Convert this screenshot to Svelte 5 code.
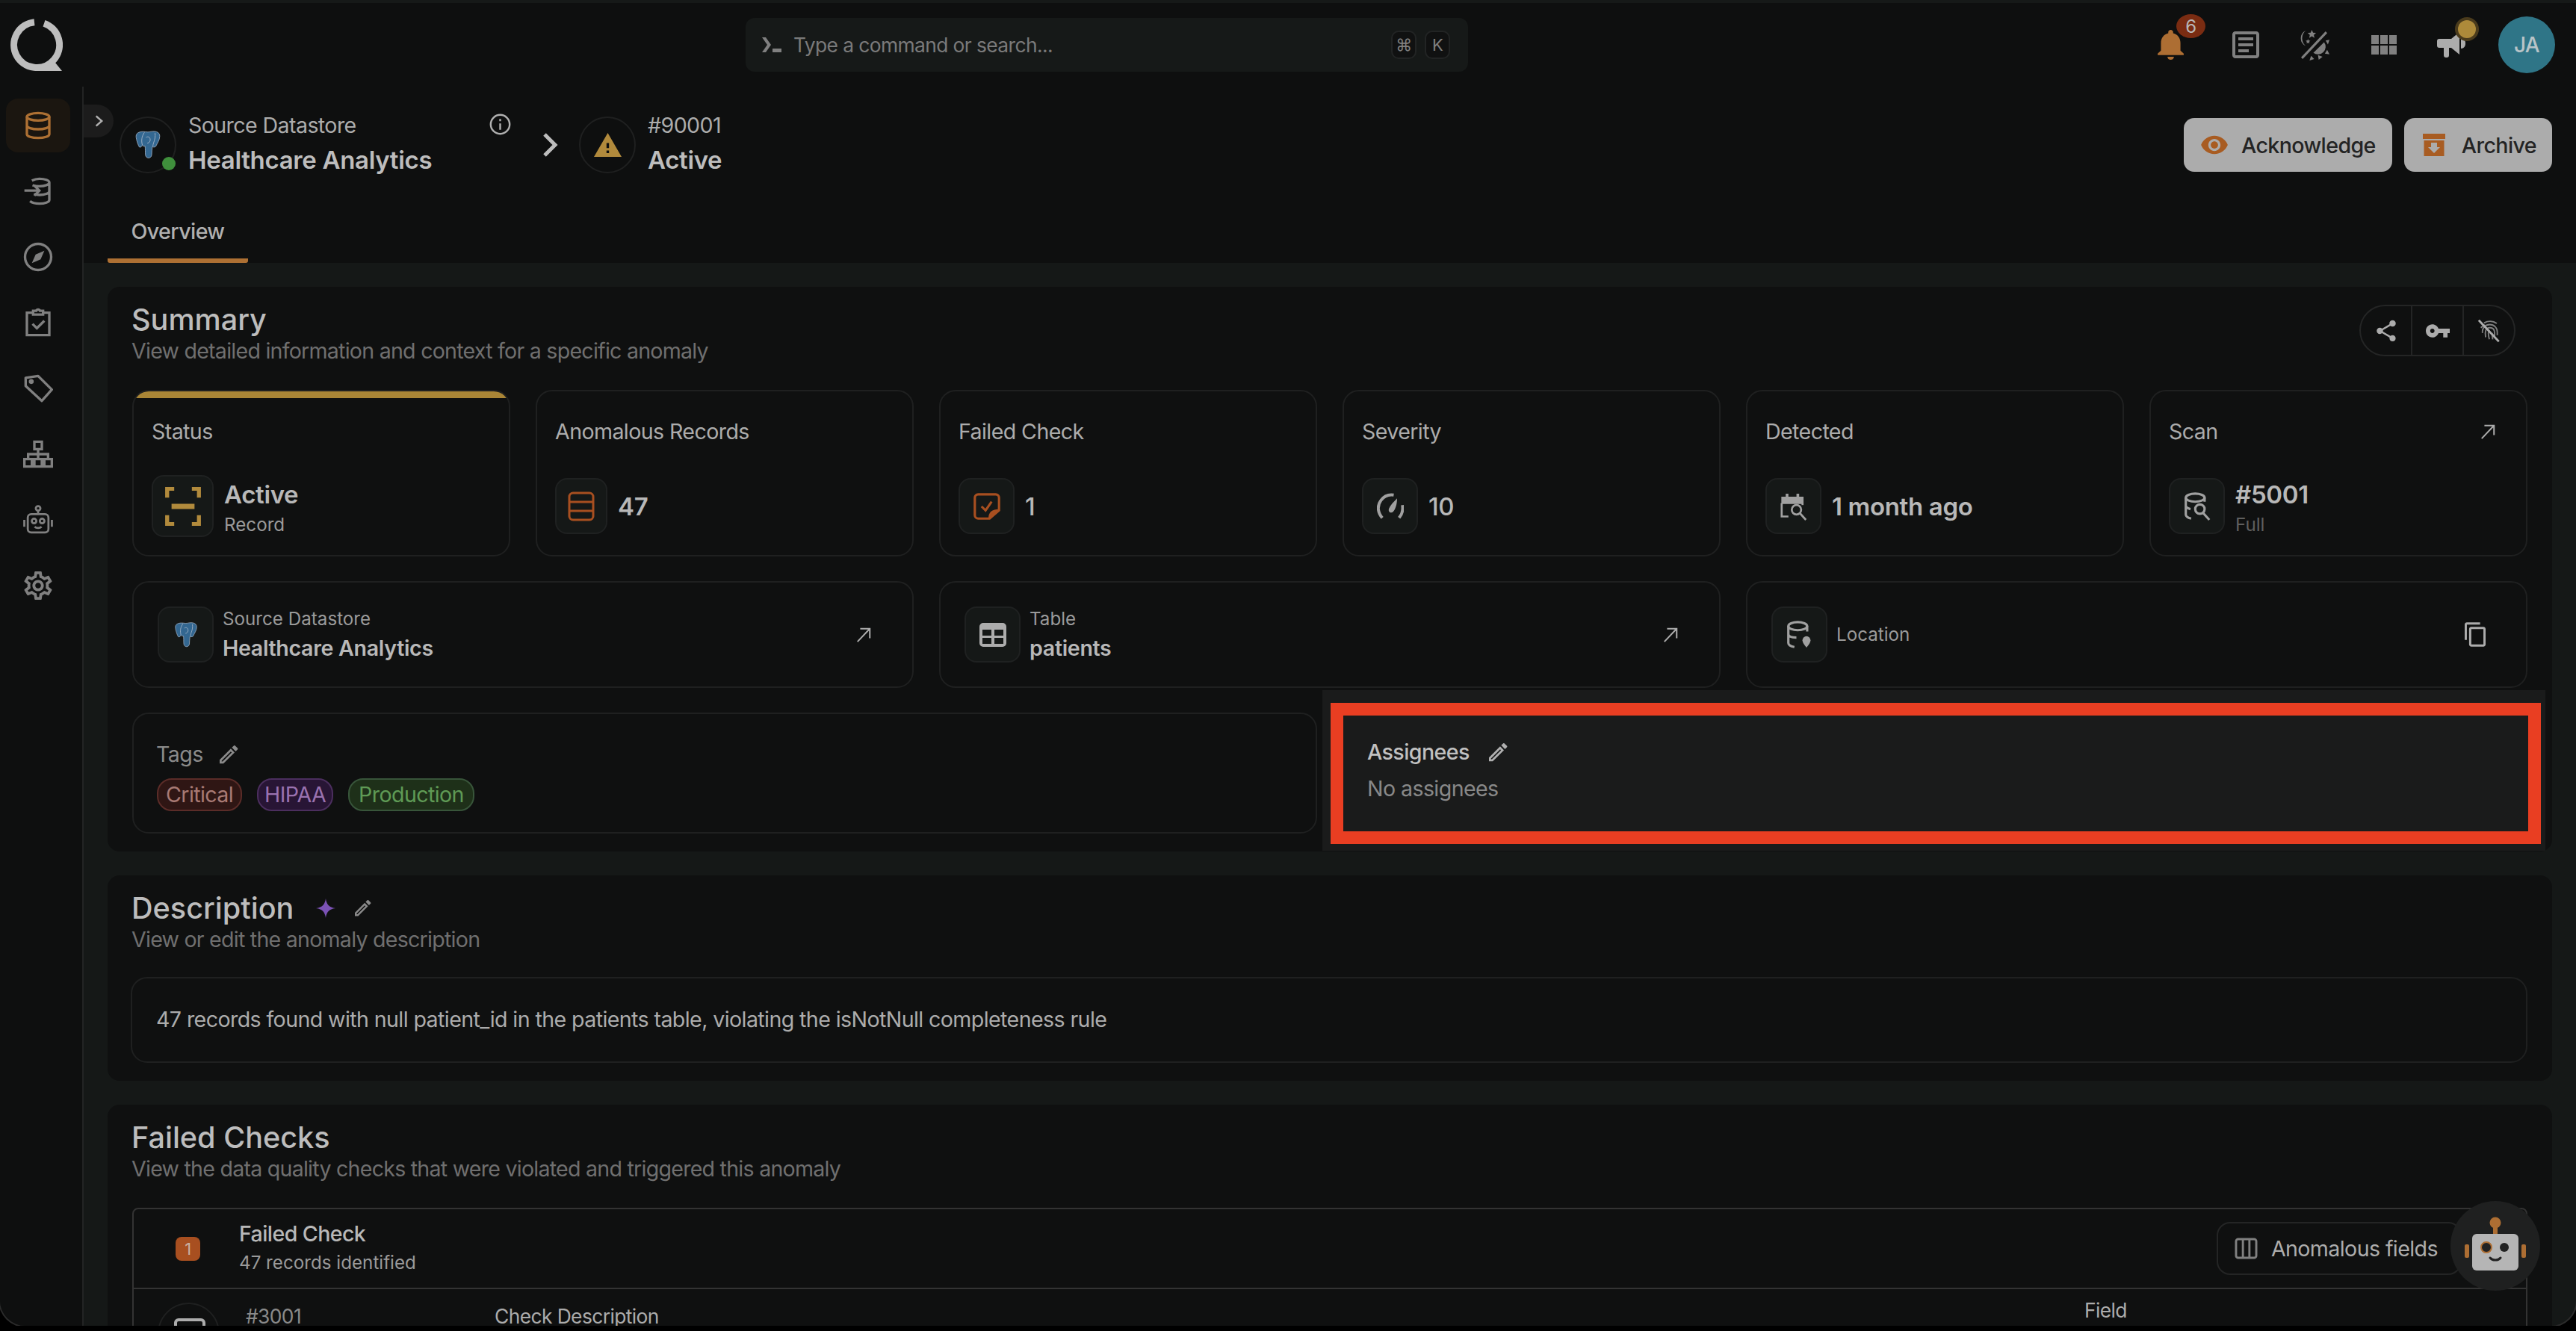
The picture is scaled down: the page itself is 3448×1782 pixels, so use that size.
<script>
  const navIcons = ["inbound", "compass", "clipboard", "tag", "sitemap", "bot", "gear"];
  const gearPath =
    "M19.43 12.98c.04-.32.07-.64.07-.98 0-.34-.03-.66-.07-.98l2.11-1.65c.19-.15.24-.42.12-.64l-2-3.46c-.09-.16-.26-.25-.44-.25-.06 0-.12.01-.17.03l-2.49 1c-.52-.4-1.08-.73-1.69-.98l-.38-2.65C14.46 2.18 14.25 2 14 2h-4c-.25 0-.46.18-.49.42l-.38 2.65c-.61.25-1.17.59-1.69.98l-2.49-1c-.06-.02-.12-.03-.18-.03-.17 0-.34.09-.43.25l-2 3.46c-.13.22-.07.49.12.64l2.11 1.65c-.04.32-.07.65-.07.98 0 .33.03.66.07.98l-2.11 1.65c-.19.15-.24.42-.12.64l2 3.46c.09.16.26.25.44.25.06 0 .12-.01.17-.03l2.49-1c.52.4 1.08.73 1.69.98l.38 2.65c.03.24.24.42.49.42h4c.25 0 .46-.18.49-.42l.38-2.65c.61-.25 1.17-.59 1.69-.98l2.49 1c.06.02.12.03.18.03.17 0 .34-.09.43-.25l2-3.46c.12-.22.07-.49-.12-.64l-2.11-1.65zm-1.98-1.71c.04.31.05.52.05.73 0 .21-.02.43-.05.73l-.14 1.13.89.7 1.08.84-.7 1.21-1.27-.51-1.04-.42-.9.68c-.43.32-.84.56-1.25.73l-1.06.43-.16 1.13-.2 1.35h-1.4l-.19-1.35-.16-1.13-1.06-.43c-.43-.18-.83-.41-1.23-.71l-.91-.7-1.06.43-1.27.51-.7-1.21 1.08-.84.89-.7-.14-1.13c-.03-.31-.05-.54-.05-.74s.02-.43.05-.73l.14-1.13-.89-.7-1.08-.84.7-1.21 1.27.51 1.04.42.9-.68c.43-.32.84-.56 1.25-.73l1.06-.43.16-1.13.2-1.35h1.39l.19 1.35.16 1.13 1.06.43c.43.18.83.41 1.23.71l.91.7 1.06-.43 1.27-.51.7 1.21-1.07.85-.89.7.14 1.13zM12 8c-2.21 0-4 1.79-4 4s1.79 4 4 4 4-1.79 4-4-1.79-4-4-4zm0 6c-1.1 0-2-.9-2-2s.9-2 2-2 2 .9 2 2-.9 2-2 2z";
  const pencilPath =
    "M3 17.25V21h3.75L17.81 9.94l-3.75-3.75L3 17.25zM5.92 19H5v-.92l9.06-9.06.92.92L5.92 19zM20.71 7.04a.996.996 0 0 0 0-1.41l-2.34-2.34a.996.996 0 0 0-1.41 0l-1.83 1.83 3.75 3.75 1.83-1.83z";
  const elephantPath =
    "M2.5 5C2.5 2 6 1 10 1.5c1 .1 2 .3 3 .1 4-1 8.5-.6 8.5 3.4 0 3-2 5.5-2.800 7.5-.5 1.300-1.500 1.500-3.200 1-.4 2-.3 4.500-.5 6.500-.1 1.500-1.200 2.500-2.500 2.500s-2.400-1-2.500-2.500c-.2-2.500 0-5-.3-7-1 .2-1.700 0-2.300-.8-.3 1.200-1.200 2-2.300 1.500C4.500 13 2.500 8 2.500 5z";
</script>

{#snippet elephant()}
  <svg class="elephant" viewBox="0 0 24 24">
    <path d={elephantPath} fill="#336791" stroke="#9fb0c4" stroke-width=".5" />
    <path d="M7.500 12c-.9-3-.6-7 1.700-10M16 13c.1-3 2.300-5 1.700-10.500M10.500 6c1.500-1 3-.4 3.300 1.400.2 1.600-.6 3-2.300 3.300" fill="none" stroke="#9fb0c4" stroke-width=".6" />
  </svg>
{/snippet}

{#snippet pencil(cls)}
  <svg class={cls} viewBox="3 3 18.500 18.500" fill="currentColor"><path d={pencilPath} /></svg>
{/snippet}

{#snippet northEast()}
  <svg class="ne" viewBox="0 0 24 24" fill="none" stroke="currentColor" stroke-width="2.2"><path d="M3 22 21 3M7 3h14v14" /></svg>
{/snippet}

<div class="frame">
  <header class="topbar">
    <svg class="logo" viewBox="0 0 70 70">
      <path d="M32 4.700A30.500 30.500 0 1 0 45 6.200" fill="none" stroke="#bdbdbd" stroke-width="9" />
      <path d="M35 70 36 63H49L56 54 69 70z" fill="#bdbdbd" />
    </svg>
    <div class="search">
      <svg class="prompt" viewBox="0 0 30 24" fill="#808080"><path d="M2 2h5l7 10-7 10H2l7-10zM16 17h12v5H16z" /></svg>
      <span class="placeholder">Type a command or search...</span>
      <kbd>⌘</kbd>
      <kbd>K</kbd>
    </div>
    <div class="top-icons">
      <div class="bell">
        <svg viewBox="3.500 2 17 20.500" preserveAspectRatio="none" fill="#ad6e33"><path d="M12 22c1.100 0 2-.9 2-2h-4c0 1.100.89 2 2 2zm6-6v-5c0-3.070-1.640-5.640-4.500-6.320V4c0-.83-.67-1.500-1.500-1.500s-1.500.67-1.500 1.500v.68C7.630 5.360 6 7.920 6 11v5l-2 2v1h16v-1l-2-2z" /></svg>
        <span class="count">6</span>
      </div>
      <svg class="doc" viewBox="3 3 18 18" fill="#808080"><path d="M19 5v14H5V5h14m0-2H5c-1.100 0-2 .9-2 2v14c0 1.100.9 2 2 2h14c1.100 0 2-.9 2-2V5c0-1.100-.9-2-2-2zM14 17H7v-2h7v2zm3-4H7v-2h10v2zm0-4H7V7h10v2z" /></svg>
      <svg class="theme" viewBox="0 0 40 40" fill="#808080">
        <path d="M9 1A11 11 0 0 0 9 21 13 13 0 0 1 9 1z" />
        <path d="m17 0 1.600 3.600 3.900.4-2.900 2.600.8 3.800-3.400-2-3.400 2 .8-3.800L11.500 4l3.900-.4zM12 12l.9 2 2.200.2-1.700 1.500.5 2.200-1.900-1.100-1.900 1.100.5-2.200-1.700-1.500 2.200-.2z" />
        <path d="M33 16a10 10 0 0 1-14 14z" />
        <path d="m35 14 5-1-2 6zM37 26l3 6-6-1zM26 39l-1-6 6 2zM14 40l2-6 4 4z" />
        <path d="M4 37 36 3" stroke="#808080" stroke-width="3" fill="none" />
      </svg>
      <svg class="apps" viewBox="0 0 34 26" fill="#808080">
        <path d="M0 0h10v12H0zM12 0h10v12H12zM24 0h10v12H24zM0 14h10v12H0zM12 14h10v12H12zM24 14h10v12H24z" />
      </svg>
      <div class="mega">
        <svg viewBox="0 0 40 34" fill="#acacac">
          <path d="M3 9h16L30 0v30L19 21h-3v10c0 2-1 3-3 3h-1c-2 0-3-1-3-3V21H3c-2 0-3-1-3-3v-6c0-2 1-3 3-3z" />
          <path d="M32 8c4 0 6 3 6 7s-2 7-6 7z" />
        </svg>
        <span class="dot"></span>
      </div>
      <div class="avatar">JA</div>
    </div>
  </header>

  <div class="body">
    <nav class="sidebar">
      <div class="nav-item active">
        <svg viewBox="0 0 24 24" fill="none" stroke="#ad7033" stroke-width="2">
          <ellipse cx="12" cy="5" rx="9" ry="3" />
          <path d="M3 5v14c0 1.700 4 3 9 3s9-1.300 9-3V5M3 12c0 1.700 4 3 9 3s9-1.300 9-3" />
        </svg>
      </div>
      {#each navIcons as icon}
        <div class="nav-item">
          {#if icon === "inbound"}
            <svg viewBox="0 0 24 24" fill="none" stroke="#808080" stroke-width="2">
              <path d="M7 3.500C9 2.500 11 2 13 2c4.500 0 8 1.300 8 3v14c0 1.700-3.500 3-8 3-3.500 0-6-.7-7.500-2M21 5c0 1.700-3.500 3-8 3-2 0-4-.3-5.500-.8M21 12c0 1.700-3.500 3-8 3-1.500 0-3-.2-4.500-.6M1 11.500h12M9 7.500l4 4-4 4" />
            </svg>
          {:else if icon === "compass"}
            <svg viewBox="0 0 24 24" fill="none" stroke="#808080" stroke-width="2">
              <circle cx="12" cy="12" r="10.500" />
              <path d="m17 7-3 7-7 3 3-7z" fill="#808080" stroke="none" />
            </svg>
          {:else if icon === "clipboard"}
            <svg viewBox="0 0 24 24" fill="none" stroke="#808080" stroke-width="2">
              <path d="M8 4H3v18h18V4h-5M8 2.500h2.500a1.600 1.600 0 0 1 3 0H16v3H8zM7.500 13l3.500 3.500 6-6" />
            </svg>
          {:else if icon === "tag"}
            <svg viewBox="0 0 24 24" fill="none" stroke="#808080" stroke-width="2">
              <path d="M2 3.500 12 2l11 11-8 9L2 10z" stroke-linejoin="round" />
              <circle cx="6.500" cy="6.500" r="1" fill="#808080" />
            </svg>
          {:else if icon === "sitemap"}
            <svg viewBox="0 0 24 24" fill="none" stroke="#808080" stroke-width="2">
              <path d="M9 2h6v6H9zM1 16h6v6H1zM9 16h6v6H9zM17 16h6v6h-6zM12 8v8M4 16v-4h16v4" />
            </svg>
          {:else if icon === "bot"}
            <svg viewBox="0 0 26 26" fill="none" stroke="#808080" stroke-width="1.800">
              <circle cx="13" cy="3" r="2" />
              <path d="M13 5v3" />
              <rect x="4" y="8" width="18" height="16" rx="3" />
              <circle cx="9.500" cy="14" r="2" />
              <circle cx="16.500" cy="14" r="2" />
              <path d="M10 19c1.500 1.500 4.500 1.500 6 0M1 13v6M25 13v6" />
            </svg>
          {:else}
            <svg viewBox="1.500 1.500 21 21" fill="#808080"><path d={gearPath} /></svg>
          {/if}
        </div>
      {/each}
    </nav>

    <main class="main">
      <button class="collapse" aria-label="Expand">
        <svg viewBox="0 0 24 24" fill="none" stroke="#b0b0b0" stroke-width="3"><path d="m8 4 9 8-9 8" /></svg>
      </button>

      <section class="page-head">
        <div class="head-row">
          <div class="crumb-icon">
            {@render elephant()}
            <span class="online"></span>
          </div>
          <div class="crumb-text first">
            <span class="crumb-label">Source Datastore</span>
            <span class="crumb-value">Healthcare Analytics</span>
          </div>
          <svg class="info" viewBox="0 0 24 24" fill="none" stroke="#b0b0b0" stroke-width="2">
            <circle cx="12" cy="12" r="10.500" />
            <path d="M12 11v7M12 6v2.500" />
          </svg>
          <svg class="crumb-chevron" viewBox="0 0 22 32" fill="none" stroke="#bdbdbd" stroke-width="5"><path d="m3 2 14 14L3 30" /></svg>
          <div class="crumb-icon warn">
            <svg viewBox="1 2 22 19" fill="#b18a3c"><path d="M1 21h22L12 2 1 21zm12-3h-2v-2h2v2zm0-4h-2v-4h2v4z" /></svg>
          </div>
          <div class="crumb-text">
            <span class="crumb-label">#90001</span>
            <span class="crumb-value">Active</span>
          </div>
          <div class="head-actions">
            <button class="action ack">
              <svg viewBox="1 4 22 16" fill="#a85c22"><path d="M12 4.500C7 4.500 2.730 7.610 1 12c1.730 4.390 6 7.500 11 7.500s9.270-3.110 11-7.500c-1.730-4.390-6-7.500-11-7.500zM12 17c-2.760 0-5-2.240-5-5s2.240-5 5-5 5 2.240 5 5-2.240 5-5 5zm0-8c-1.660 0-3 1.340-3 3s1.340 3 3 3 3-1.340 3-3-1.340-3-3-3z" /></svg>
              Acknowledge
            </button>
            <button class="action arc">
              <svg viewBox="0 0 30 30" fill="#a85c22"><path d="M0 0h30v7H0zM1.500 9h27v21h-27zM11 12v6H7l8 8 8-8h-4v-6z" fill-rule="evenodd" /></svg>
              Archive
            </button>
          </div>
        </div>
        <div class="tab">Overview</div>
      </section>

      <div class="content">
        <section class="panel summary">
          <div class="panel-head">
            <div>
              <h2>Summary</h2>
              <p>View detailed information and context for a specific anomaly</p>
            </div>
            <div class="tools">
              <span>
                <svg viewBox="0 0 24 24" fill="#acacac"><path d="M18 16.080c-.76 0-1.440.3-1.960.77L8.910 12.700c.05-.23.09-.46.09-.7s-.04-.47-.09-.7l7.050-4.110c.54.5 1.250.81 2.040.81 1.660 0 3-1.340 3-3s-1.340-3-3-3-3 1.340-3 3c0 .24.04.47.09.7L8.040 9.810C7.500 9.310 6.790 9 6 9c-1.660 0-3 1.340-3 3s1.340 3 3 3c.79 0 1.500-.31 2.040-.81l7.120 4.160c-.05.21-.08.43-.08.65 0 1.610 1.310 2.920 2.920 2.920 1.610 0 2.920-1.310 2.920-2.920s-1.310-2.920-2.920-2.920z" /></svg>
              </span>
              <span>
                <svg class="key" viewBox="1 6 22 12" fill="#acacac"><path d="M12.650 10C11.830 7.670 9.610 6 7 6c-3.310 0-6 2.690-6 6s2.690 6 6 6c2.610 0 4.830-1.670 5.650-4H17v4h4v-4h2v-4H12.650zM7 14c-1.100 0-2-.9-2-2s.9-2 2-2 2 .9 2 2-.9 2-2 2z" /></svg>
              </span>
              <span>
                <svg viewBox="0 0 24 24" fill="none" stroke="#808080" stroke-width="1.300">
                  <path d="M7 4.500a11 11 0 0 1 12 .5M4 9a10 10 0 0 1 4-2.500M5.500 14c-.5-5 3-8 7-8s7 3 7 7v3M8.500 18c-1-5 0-9 4-9s4.500 3 4.500 5v4M12 11c-1.500 1.500-1 5 0 9M14.500 14c0 2 .3 4 .7 6" />
                  <path d="m2 2 19 20" stroke="#acacac" stroke-width="2" />
                </svg>
              </span>
            </div>
          </div>

          <div class="grid">
            <div class="card stat status">
              <span class="label">Status</span>
              <div class="value-row">
                <div class="ibox tall">
                  <svg viewBox="0 0 40 44" fill="none" stroke="#b18a3c" stroke-width="4.500">
                    <path d="M2 12V2h8M30 2h8v10M2 32v10h8M30 42h8V32" />
                    <path d="M7 22h26" stroke-width="6" />
                  </svg>
                </div>
                <div class="stack">
                  <strong>Active</strong>
                  <small>Record</small>
                </div>
              </div>
            </div>

            <div class="card stat">
              <span class="label">Anomalous Records</span>
              <div class="value-row">
                <div class="ibox narrow">
                  <svg viewBox="0 0 36 40" fill="none" stroke="#a84f20" stroke-width="3">
                    <rect x="2" y="2" width="32" height="36" rx="5" />
                    <path d="M2 14h32M2 26h32" />
                  </svg>
                </div>
                <strong>47</strong>
              </div>
            </div>

            <div class="card stat">
              <span class="label">Failed Check</span>
              <div class="value-row">
                <div class="ibox">
                  <svg viewBox="0 0 40 40" fill="none" stroke="#a84f20" stroke-width="3.500">
                    <path d="M24 38H7a5 5 0 0 1-5-5V7a5 5 0 0 1 5-5h26a5 5 0 0 1 5 5v19z" />
                    <path d="M24 38c0-8 4-12 14-12" fill="#a84f20" />
                    <path d="m12 20 6 6 9-13" />
                  </svg>
                </div>
                <strong class="light">1</strong>
              </div>
            </div>

            <div class="card stat">
              <span class="label">Severity</span>
              <div class="value-row">
                <div class="ibox">
                  <svg viewBox="0 0 40 40" fill="none" stroke="#a0a0a0" stroke-width="4.500">
                    <path d="M8 37C1 29 0 19 6 11 11 4 18 2 25 3M33 37c5-6 6-13 5-19" />
                    <path d="M30 8c0 8-2 16-6 20-3 3-8 0-6-5 2-5 7-10 12-15z" fill="#a0a0a0" stroke="none" />
                  </svg>
                </div>
                <strong class="light">10</strong>
              </div>
            </div>

            <div class="card stat">
              <span class="label">Detected</span>
              <div class="value-row">
                <div class="ibox">
                  <svg viewBox="0 0 40 42" fill="none" stroke="#a0a0a0" stroke-width="3">
                    <path d="M3 8h30v8H3z" fill="#a0a0a0" />
                    <path d="M10 2v5M26 2v5" stroke-width="4" />
                    <path d="M2 16v20h10" />
                    <circle cx="24" cy="26" r="7" />
                    <path d="m29 31 9 10" />
                    <path d="M33 16v3" />
                  </svg>
                </div>
                <strong>1 month ago</strong>
              </div>
            </div>

            <div class="card stat">
              <div class="label-row">
                <span class="label">Scan</span>
                {@render northEast()}
              </div>
              <div class="value-row">
                <div class="ibox">
                  <svg viewBox="0 0 40 42" fill="none" stroke="#a0a0a0" stroke-width="3.500">
                    <ellipse cx="17" cy="8" rx="14" ry="6" />
                    <path d="M3 8v25c0 3 3 5 8 6M31 8v6M3 20c0 3 3 4 7 5" />
                    <circle cx="24" cy="25" r="7" />
                    <path d="m29 31 9 10" />
                  </svg>
                </div>
                <div class="stack">
                  <strong>#5001</strong>
                  <small class="dim">Full</small>
                </div>
              </div>
            </div>

            <div class="card wide link">
              <div class="ibox">
                {@render elephant()}
              </div>
              <div class="stack">
                <small>Source Datastore</small>
                <strong class="mid">Healthcare Analytics</strong>
              </div>
              {@render northEast()}
            </div>

            <div class="card wide link">
              <div class="ibox">
                <svg viewBox="0 0 36 32" fill="#acacac"><path d="M5 0h26a5 5 0 0 1 5 5v22a5 5 0 0 1-5 5H5a5 5 0 0 1-5-5V5a5 5 0 0 1 5-5zM4 9v8h12V9zM20 9v8h12V9zM4 20v8h12v-8zM20 20v8h12v-8z" fill-rule="evenodd" /></svg>
              </div>
              <div class="stack">
                <small>Table</small>
                <strong class="mid">patients</strong>
              </div>
              {@render northEast()}
            </div>

            <div class="card wide link">
              <div class="ibox">
                <svg viewBox="0 0 40 42" fill="none" stroke="#a0a0a0" stroke-width="3.500">
                  <ellipse cx="17" cy="8" rx="14" ry="6" />
                  <path d="M3 8v25c0 3 3 5 9 6M31 8v8M3 20c0 3 4 5 12 5" />
                  <path d="M30 40c-4-5-6-8-6-11a6 6 0 0 1 12 0c0 3-2 6-6 11z" fill="#a0a0a0" stroke="none" />
                </svg>
              </div>
              <small class="location">Location</small>
              <svg class="copy" viewBox="2 1 19 22" fill="#acacac"><path d="M16 1H4c-1.100 0-2 .9-2 2v14h2V3h12V1zm3 4H8c-1.100 0-2 .9-2 2v14c0 1.100.9 2 2 2h11c1.100 0 2-.9 2-2V7c0-1.100-.9-2-2-2zm0 16H8V7h11v14z" /></svg>
            </div>

            <div class="card half tags">
              <div class="tags-head">
                <span>Tags</span>
                {@render pencil("pen")}
              </div>
              <div class="pills">
                <span class="pill critical">Critical</span>
                <span class="pill hipaa">HIPAA</span>
                <span class="pill production">Production</span>
              </div>
            </div>

            <div class="card half assignees">
              <div class="assignee-head">
                <span>Assignees</span>
                {@render pencil("pen")}
              </div>
              <p>No assignees</p>
            </div>
          </div>
        </section>

        <section class="panel description">
          <div class="title-row">
            <h2>Description</h2>
            <svg class="spark" viewBox="0 0 24 24" fill="#7b52b5"><path d="M12 0c1 7 4 11 12 12-8 1-11 5-12 12-1-7-4-11-12-12 8-1 11-5 12-12z" /></svg>
            {@render pencil("pen small")}
          </div>
          <p>View or edit the anomaly description</p>
          <div class="desc-box">47 records found with null patient_id in the patients table, violating the isNotNull completeness rule</div>
        </section>

        <section class="panel failed">
          <h2>Failed Checks</h2>
          <p>View the data quality checks that were violated and triggered this anomaly</p>
          <div class="check-table">
            <div class="check-head">
              <span class="num">1</span>
              <div class="check-title">
                <span>Failed Check</span>
                <small>47 records identified</small>
              </div>
              <button class="fields">
                <svg viewBox="0 0 32 30" fill="none" stroke="#808080" stroke-width="3">
                  <rect x="2" y="2" width="28" height="26" rx="3" />
                  <path d="M11.500 2v26M20.500 2v26" />
                </svg>
                Anomalous fields
              </button>
            </div>
            <div class="check-row">
              <div class="row-icon"><span></span></div>
              <span class="check-id">#3001</span>
              <span class="check-desc">Check Description</span>
              <span class="check-field">Field</span>
            </div>
          </div>
        </section>
      </div>
    </main>
  </div>

  <button class="assistant" aria-label="Assistant">
    <svg viewBox="0 0 120 120">
      <circle cx="60" cy="29" r="7.500" fill="#ad6e33" />
      <rect x="57" y="30" width="6" height="14" fill="#ad6e33" />
      <rect x="19" y="58" width="6" height="18" rx="2" fill="#ad6e33" />
      <rect x="95" y="58" width="6" height="18" rx="2" fill="#ad6e33" />
      <rect x="29" y="44" width="62" height="49" rx="6" fill="#b5b5b5" />
      <circle cx="48" cy="62" r="7" fill="#222" stroke="#ad6e33" stroke-width="2" />
      <circle cx="72" cy="62" r="6" fill="#222" />
      <path d="M53 76c3 4 11 4 14 0" fill="none" stroke="#222" stroke-width="3" stroke-linecap="round" />
    </svg>
  </button>
</div>

<style>
  :global(body) {
    background: #000;
    margin: 0;
  }

  .frame {
    background: #151817;
    border-radius: 0 0 34px 34px;
    box-shadow: 0 0 0 2px #2b2b2b;
    color: #acacac;
    display: flex;
    flex-direction: column;
    font-family: Inter, "Liberation Sans", sans-serif;
    height: 1775px;
    letter-spacing: -0.6px;
    overflow: hidden;
    position: relative;
    width: 3448px;
  }

  h2,
  p {
    margin: 0;
  }

  button {
    border: 0;
    font: inherit;
    letter-spacing: inherit;
    padding: 0;
  }

  .topbar {
    align-items: center;
    background: #0e0f0f;
    border-top: 4px solid #161918;
    box-sizing: border-box;
    display: flex;
    flex: none;
    height: 116px;
    padding: 0 28px 0 14px;
  }

  .logo {
    height: 70px;
    width: 70px;
  }

  .search {
    align-items: center;
    background: #161918;
    border-radius: 12px;
    box-sizing: border-box;
    display: flex;
    height: 72px;
    margin-left: 914px;
    padding: 0 24px 0 20px;
    width: 967px;
  }

  .prompt {
    height: 24px;
    width: 30px;
  }

  .placeholder {
    color: #7a7a7a;
    flex: 1;
    font-size: 26.4px;
    margin-left: 14px;
  }

  kbd {
    align-items: center;
    background: #101111;
    border: 2px solid #222424;
    border-radius: 10px;
    box-sizing: border-box;
    color: #808080;
    display: flex;
    font-family: inherit;
    font-size: 22px;
    height: 38px;
    justify-content: center;
    margin-left: 11px;
    width: 34px;
  }

  .top-icons {
    align-items: center;
    display: flex;
    margin-left: auto;
  }

  .bell {
    height: 42px;
    position: relative;
    width: 37px;
  }

  .bell svg {
    height: 42px;
    width: 37px;
  }

  .count {
    align-items: center;
    background: #7a2c12;
    border-radius: 50%;
    color: #b8b8b8;
    display: flex;
    font-size: 24px;
    height: 32px;
    justify-content: center;
    left: 26px;
    position: absolute;
    top: -20px;
    width: 39px;
  }

  .doc {
    height: 36px;
    margin-left: 64px;
    width: 36px;
  }

  .theme {
    height: 41px;
    margin-left: 53px;
    width: 41px;
  }

  .apps {
    height: 26px;
    margin-left: 56px;
    width: 34px;
  }

  .mega {
    height: 34px;
    margin-left: 54px;
    position: relative;
    width: 40px;
  }

  .mega svg {
    display: block;
    height: 34px;
    width: 40px;
  }

  .dot {
    background: #ad8a3a;
    border-radius: 50%;
    box-shadow: 0 0 0 4px #4a3b1c;
    height: 24px;
    position: absolute;
    right: -12px;
    top: -16px;
    width: 24px;
  }

  .avatar {
    align-items: center;
    background: #2f7587;
    border-radius: 50%;
    color: #b8c4c8;
    display: flex;
    font-size: 28px;
    font-weight: 500;
    height: 76px;
    justify-content: center;
    margin-left: 42px;
    width: 76px;
  }

  .body {
    display: flex;
    flex: 1;
    min-height: 0;
  }

  .sidebar {
    align-items: flex-start;
    background: #0e0f0f;
    border-right: 2px solid #232424;
    display: flex;
    flex: none;
    flex-direction: column;
    gap: 16px;
    padding: 16px 0 0 8px;
    width: 102px;
  }

  .nav-item {
    align-items: center;
    border-radius: 16px;
    display: flex;
    height: 72px;
    justify-content: center;
    width: 86px;
  }

  .nav-item svg {
    height: 40px;
    width: 40px;
  }

  .nav-item.active {
    background: #1b1610;
  }

  .main {
    flex: 1;
    min-width: 0;
    position: relative;
  }

  .collapse {
    align-items: center;
    background: #1c1c1c;
    border-radius: 0 22px 22px 0;
    display: flex;
    height: 44px;
    justify-content: center;
    left: 0;
    position: absolute;
    top: 24px;
    width: 40px;
  }

  .collapse svg {
    height: 20px;
    width: 20px;
  }

  .page-head {
    background: #0e0f0f;
    display: flex;
    flex-direction: column;
    height: 236px;
    justify-content: space-between;
  }

  .head-row {
    align-items: flex-start;
    display: flex;
    padding: 40px 32px 0 48px;
  }

  .crumb-icon {
    align-items: center;
    border: 2px solid #1f2020;
    border-radius: 50%;
    box-sizing: border-box;
    display: flex;
    flex: none;
    height: 76px;
    justify-content: center;
    position: relative;
    width: 76px;
  }

  .elephant {
    height: 42px;
    width: 40px;
  }

  .online {
    background: #3f8f3c;
    border-radius: 50%;
    bottom: 2px;
    height: 18px;
    position: absolute;
    right: -1px;
    width: 18px;
  }

  .crumb-icon.warn {
    margin-left: 27px;
  }

  .warn svg {
    height: 32px;
    width: 37px;
  }

  .crumb-text {
    display: flex;
    flex-direction: column;
    gap: 8px;
    margin-left: 16px;
    margin-top: -6px;
  }

  .crumb-text.first {
    width: 403px;
  }

  .crumb-label {
    font-size: 28.6px;
    line-height: 36px;
  }

  .crumb-value {
    color: #bdbdbd;
    font-size: 33px;
    font-weight: 600;
    letter-spacing: -0.33px;
    line-height: 40px;
  }

  .info {
    height: 29px;
    margin-top: -4px;
    width: 29px;
  }

  .crumb-chevron {
    height: 32px;
    margin: 22px 0 0 42px;
    width: 22px;
  }

  .head-actions {
    display: flex;
    gap: 16px;
    margin-left: auto;
    margin-top: 2px;
  }

  .action {
    align-items: center;
    background: #acacac;
    border-radius: 14px;
    color: #242424;
    display: flex;
    font-size: 28.6px;
    font-weight: 500;
    height: 72px;
    padding: 0 21px;
  }

  .ack {
    gap: 18px;
    padding: 0 22px 0 23px;
  }

  .ack svg {
    height: 26px;
    width: 36px;
  }

  .arc {
    gap: 22px;
    padding-left: 25px;
  }

  .arc svg {
    height: 30px;
    width: 30px;
  }

  .tab {
    border-bottom: 6px solid #ad7033;
    border-radius: 0 0 3px 3px;
    box-sizing: border-box;
    color: #b0b0b0;
    font-size: 28.6px;
    font-weight: 500;
    height: 66px;
    line-height: 48px;
    margin-left: 32px;
    text-align: center;
    width: 188px;
  }

  .content {
    display: flex;
    flex-direction: column;
    gap: 32px;
    padding: 32px 32px 0;
  }

  .panel {
    background: #0f1010;
    border-radius: 16px;
    flex: none;
    padding: 20px 33px 24px;
  }

  .panel h2 {
    color: #bdbdbd;
    font-size: 39.6px;
    font-weight: 500;
    letter-spacing: 0;
    line-height: 48px;
    margin-left: -1px;
  }

  .panel p {
    color: #6f6f6f;
    font-size: 28.6px;
    letter-spacing: -0.76px;
    line-height: 36px;
    margin-left: -1px;
  }

  .panel-head {
    align-items: flex-start;
    display: flex;
    justify-content: space-between;
  }

  .tools {
    border: 2px solid #242525;
    border-radius: 36px;
    box-sizing: border-box;
    display: flex;
    height: 69px;
    margin: 4px 16px 0 0;
    width: 209px;
  }

  .tools span {
    align-items: center;
    border-left: 2px solid #242525;
    display: flex;
    flex: 1;
    justify-content: center;
  }

  .tools span:first-child {
    border-left: 0;
  }

  .tools svg {
    height: 34px;
    width: 34px;
  }

  .tools .key {
    height: 18px;
    width: 32px;
  }

  .grid {
    display: grid;
    gap: 33px 34px;
    grid-template-columns: repeat(6, 1fr);
    grid-template-rows: 223px 143px 162px;
    margin-top: 34px;
  }

  .card {
    border: 2px solid #1f2020;
    border-radius: 22px;
    box-sizing: border-box;
    min-width: 0;
    position: relative;
  }

  .stat {
    display: flex;
    flex-direction: column;
    padding: 36px 24px 24px;
  }

  .status {
    overflow: hidden;
  }

  .status::before {
    background: #a98536;
    content: "";
    height: 9px;
    left: 0;
    position: absolute;
    right: 0;
    top: 0;
  }

  .label {
    font-size: 28.6px;
    line-height: 36px;
  }

  .label-row {
    align-items: center;
    display: flex;
    justify-content: space-between;
    padding-right: 16px;
  }

  .value-row {
    align-items: center;
    display: flex;
    gap: 14px;
    height: 83px;
    margin-top: 40px;
  }

  .ibox {
    align-items: center;
    background: #151817;
    border: 2px solid #1f2121;
    border-radius: 16px;
    box-sizing: border-box;
    display: flex;
    flex: none;
    height: 75px;
    justify-content: center;
    width: 75px;
  }

  .ibox svg {
    height: 40px;
    width: 36px;
  }

  .ibox.tall {
    height: 83px;
    width: 83px;
  }

  .ibox.narrow {
    width: 70px;
  }

  .ibox.tall svg {
    height: 52px;
    width: 52px;
  }

  .stack {
    display: flex;
    flex-direction: column;
    gap: 6px;
  }

  .value-row .stack {
    margin-top: 4px;
  }

  strong {
    color: #b8b8b8;
    font-size: 33px;
    font-weight: 600;
    letter-spacing: -0.33px;
    line-height: 40px;
  }

  strong.light {
    font-weight: 500;
  }

  strong.mid {
    font-size: 28.6px;
    line-height: 36px;
  }

  small {
    color: #9a9a9a;
    font-size: 24.2px;
    letter-spacing: 0;
    line-height: 30px;
  }

  small.dim {
    color: #5f5f5f;
  }

  .ne {
    color: #acacac;
    flex: none;
    height: 22px;
    width: 22px;
  }

  .wide {
    grid-column: span 2;
  }

  .half {
    grid-column: span 3;
  }

  .link {
    align-items: center;
    display: flex;
    gap: 12px;
    padding: 0 54px 0 32px;
  }

  .link > .ne,
  .copy {
    margin-left: auto;
  }

  .copy {
    height: 33px;
    width: 28px;
  }

  .location {
    font-size: 24.2px;
  }

  .tags {
    padding: 36px 31px 0 30px;
  }

  .tags-head,
  .assignee-head {
    align-items: center;
    display: flex;
    gap: 22px;
  }

  .tags-head {
    color: #8a8a8a;
    font-size: 28.6px;
    line-height: 36px;
  }

  .pen {
    color: #8a8a8a;
    height: 25px;
    width: 25px;
  }

  .pills {
    display: flex;
    gap: 20px;
    margin: 14px 0 0 1px;
  }

  .pill {
    border: 2px solid;
    border-radius: 20px;
    box-sizing: border-box;
    font-size: 28.6px;
    height: 44px;
    line-height: 40px;
    padding: 0 10px;
  }

  .critical {
    background: #2f1614;
    border-color: #5b2c28;
    color: #a87a74;
  }

  .hipaa {
    background: #281535;
    border-color: #4b2e5e;
    color: #9a72b0;
    padding: 0 8px;
  }

  .production {
    background: #1e3019;
    border-color: #38553a;
    color: #5f9a55;
    padding: 0 12px;
  }

  .assignees {
    background: #1a1b1b;
    padding: 32px 31px 0;
    z-index: 1;
  }

  /* lighter halo and the red annotation box drawn around the card */
  .assignees::before {
    background: #1a1b1b;
    bottom: -25px;
    content: "";
    left: -29px;
    position: absolute;
    right: -26px;
    top: -32px;
    z-index: -1;
  }

  .assignees::after {
    border: 17px solid #e93e22;
    bottom: -16px;
    content: "";
    left: -18px;
    pointer-events: none;
    position: absolute;
    right: -20px;
    top: -15px;
  }

  .assignee-head {
    color: #c0c0c0;
    font-size: 28.6px;
    font-weight: 500;
    gap: 26px;
    line-height: 38px;
  }

  .assignees .pen {
    color: #b0b0b0;
    height: 25px;
    width: 25px;
  }

  .assignees p {
    color: #888;
    font-size: 28.6px;
    letter-spacing: -0.6px;
    line-height: 36px;
    margin: 12px 0 0;
  }

  .title-row {
    align-items: center;
    display: flex;
  }

  .spark {
    height: 26px;
    margin-left: 30px;
    width: 26px;
  }

  .pen.small {
    height: 22px;
    margin-left: 26px;
    width: 22px;
  }

  .desc-box {
    align-items: center;
    border: 2px solid #1f2020;
    border-radius: 22px;
    box-sizing: border-box;
    color: #acacac;
    display: flex;
    font-size: 28.6px;
    height: 115px;
    margin: 32px 0 0 -2px;
    padding: 0 32px 2px;
  }

  .check-table {
    border: 2px solid #333;
    border-radius: 8px 8px 0 0;
    margin-top: 34px;
  }

  .check-head {
    align-items: center;
    border-bottom: 2px solid #333;
    box-sizing: border-box;
    display: flex;
    height: 107px;
    padding: 0 86px 0 56px;
  }

  .num {
    align-items: center;
    background: #a84f20;
    border-radius: 8px;
    color: #c9b0a0;
    display: flex;
    font-size: 22px;
    height: 32px;
    justify-content: center;
    width: 33px;
  }

  .check-title {
    display: flex;
    flex-direction: column;
    gap: 6px;
    margin: -3px 0 0 52px;
  }

  .check-title span {
    color: #b8b8b8;
    font-size: 28.6px;
    font-weight: 500;
    line-height: 36px;
  }

  .fields {
    align-items: center;
    background: none;
    border: 2px solid #242525;
    border-radius: 18px;
    color: #acacac;
    display: flex;
    font-size: 28.6px;
    gap: 18px;
    height: 71px;
    margin-left: auto;
    padding: 0 30px 0 22px;
  }

  .fields svg {
    height: 29px;
    width: 31px;
  }

  .check-row {
    align-items: flex-start;
    display: flex;
    height: 80px;
    padding: 18px 0 0 32px;
    position: relative;
  }

  .row-icon {
    border: 2px solid #1f2020;
    border-radius: 50%;
    box-sizing: border-box;
    flex: none;
    height: 83px;
    position: relative;
    width: 83px;
  }

  .row-icon span {
    border: 4px solid #acacac;
    border-radius: 6px;
    height: 40px;
    left: 20px;
    position: absolute;
    top: 19px;
    width: 34px;
  }

  .check-id {
    color: #8a8a8a;
    font-size: 26.4px;
    margin-left: 35px;
    margin-top: 2px;
    width: 333px;
  }

  .check-desc {
    font-size: 26.4px;
    margin-top: 2px;
  }

  .check-field {
    font-size: 26.4px;
    left: 2611px;
    position: absolute;
    top: 12px;
  }

  .assistant {
    background: #1f2020;
    border-radius: 50%;
    bottom: 47px;
    height: 120px;
    left: 3280px;
    position: absolute;
    width: 120px;
  }

  .assistant svg {
    display: block;
    height: 120px;
    width: 120px;
  }
</style>
